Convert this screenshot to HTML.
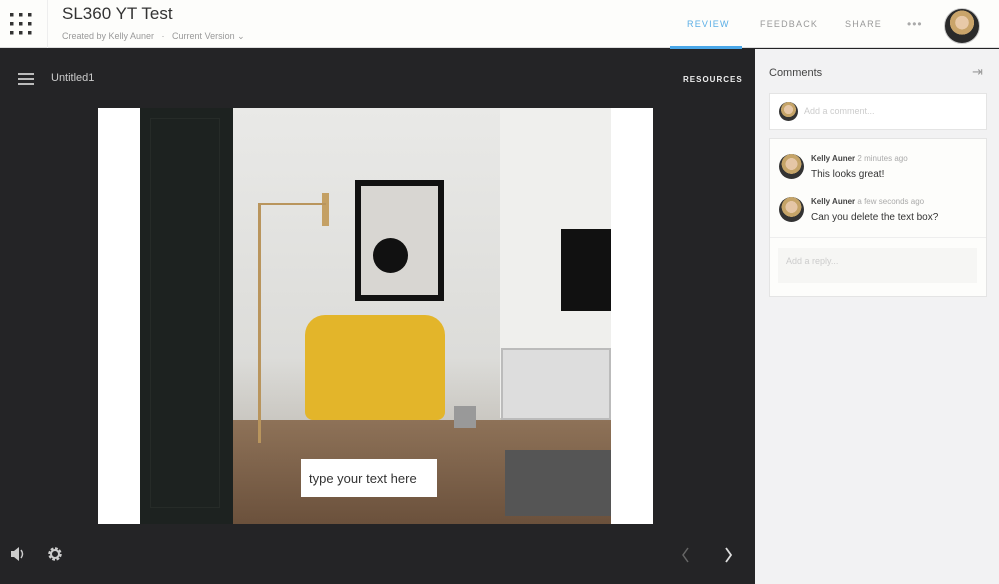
<!DOCTYPE html>
<html><head><style>
*{margin:0;padding:0;box-sizing:border-box}
body{width:999px;height:584px;overflow:hidden;font-family:"Liberation Sans",sans-serif;background:#242426;position:relative}
.a{position:absolute}
</style></head><body>
<div class="a" style="left:0;top:0;width:999px;height:48px;background:#fdfdfb;border-bottom:1px solid #ddd"></div>
<div class="a" style="left:47px;top:0;width:1px;height:48px;background:#eee"></div>
<svg class="a" style="left:10px;top:13px" width="24" height="22"><g fill="#333"><rect x="0" y="0" width="3.5" height="3.5"/><rect x="9" y="0" width="3.5" height="3.5"/><rect x="18" y="0" width="3.5" height="3.5"/><rect x="0" y="9" width="3.5" height="3.5"/><rect x="9" y="9" width="3.5" height="3.5"/><rect x="18" y="9" width="3.5" height="3.5"/><rect x="0" y="18" width="3.5" height="3.5"/><rect x="9" y="18" width="3.5" height="3.5"/><rect x="18" y="18" width="3.5" height="3.5"/></g></svg>
<div class="a" style="left:62px;top:4px;font-size:17px;color:#333">SL360 YT Test</div>
<div class="a" style="left:62px;top:31px;font-size:9px;color:#999">Created by Kelly Auner &nbsp;&nbsp;·&nbsp;&nbsp; Current Version ⌄</div>
<div class="a" style="left:687px;top:19px;font-size:9px;letter-spacing:1.2px;color:#5aaee6">REVIEW</div>
<div class="a" style="left:670px;top:46px;width:72px;height:3px;background:#4aa7e8"></div>
<div class="a" style="left:760px;top:19px;font-size:9px;letter-spacing:1.2px;color:#999">FEEDBACK</div>
<div class="a" style="left:845px;top:19px;font-size:9px;letter-spacing:1.2px;color:#999">SHARE</div>
<div class="a" style="left:907px;top:17px;font-size:12px;letter-spacing:1px;color:#aaa">•••</div>
<div class="a" style="left:944px;top:8px;width:36px;height:36px;border-radius:50%;background:radial-gradient(circle at 50% 40%,#e8c9a8 0 25%,#c9a46a 26% 45%,#2a2a2a 46%);border:1px solid #ccc"></div>
<svg class="a" style="left:18px;top:73px" width="17" height="12"><g fill="#bbb"><rect y="0" width="16" height="2"/><rect y="5" width="16" height="2"/><rect y="10" width="16" height="2"/></g></svg>
<div class="a" style="left:51px;top:72px;font-size:11px;color:#ccc">Untitled1</div>
<div class="a" style="left:683px;top:75px;font-size:8px;font-weight:bold;letter-spacing:1px;color:#eee">RESOURCES</div>
<div class="a" style="left:98px;top:108px;width:555px;height:416px;background:#fff"></div>
<div class="a" style="left:140px;top:108px;width:471px;height:416px;background:linear-gradient(#e9e9e7,#dcdcd9 60%,#c9c6c0 76%);overflow:hidden">
 <div class="a" style="left:0;top:312px;width:471px;height:104px;background:linear-gradient(#8e7258,#6b513c)"></div>
 <div class="a" style="left:360px;top:0;width:111px;height:310px;background:#efefed"></div>
 <div class="a" style="left:0;top:0;width:93px;height:416px;background:#1d2220"></div>
 <div class="a" style="left:10px;top:10px;width:70px;height:390px;border:1px solid #262b28"></div>
 <div class="a" style="left:421px;top:121px;width:50px;height:82px;background:#111"></div>
 <div class="a" style="left:215px;top:72px;width:89px;height:121px;background:#111;padding:6px"><div style="width:100%;height:100%;background:#d8d6d2;position:relative"><div class="a" style="left:12px;top:52px;width:35px;height:35px;border-radius:50%;background:#111"></div></div></div>
 <div class="a" style="left:361px;top:240px;width:110px;height:72px;background:#ddd;border:2px solid #bbb"></div>
 <div class="a" style="left:118px;top:95px;width:3px;height:240px;background:#b9955d"></div>
 <div class="a" style="left:182px;top:85px;width:7px;height:33px;background:#c4a064"></div>
 <div class="a" style="left:118px;top:95px;width:68px;height:2px;background:#b9955d"></div>
 <div class="a" style="left:165px;top:207px;width:140px;height:105px;background:#e3b52a;border-radius:20px 20px 8px 8px"></div>
 <div class="a" style="left:314px;top:298px;width:22px;height:22px;background:#999"></div>
 <div class="a" style="left:365px;top:342px;width:106px;height:66px;background:#555"></div>
</div>
<div class="a" style="left:301px;top:459px;width:136px;height:38px;background:#fff"></div>
<div class="a" style="left:309px;top:471px;font-size:13px;color:#333">type your text here</div>
<svg class="a" style="left:10px;top:545px" width="56" height="18"><path d="M1 6h3l5-4v14l-5-4H1z" fill="#ccc"/><path d="M11 5q3 4 0 8" stroke="#ccc" fill="none" stroke-width="1.5"/><circle cx="45" cy="9" r="5" fill="none" stroke="#ccc" stroke-width="3.5" stroke-dasharray="2.5 1.4"/><circle cx="45" cy="9" r="4" fill="none" stroke="#ccc" stroke-width="2"/></svg>
<svg class="a" style="left:680px;top:546px" width="60" height="18"><path d="M8 2l-5 7 5 7" stroke="#666" stroke-width="1.5" fill="none"/><path d="M46 2l5 7-5 7" stroke="#ddd" stroke-width="1.8" fill="none"/></svg>
<div class="a" style="left:755px;top:49px;width:244px;height:535px;background:#f2f2f3"></div>
<div class="a" style="left:769px;top:67px;font-size:11px;color:#444">Comments</div>
<div class="a" style="left:972px;top:64px;font-size:13px;color:#999">⇥</div>
<div class="a" style="left:769px;top:93px;width:218px;height:37px;background:#fff;border:1px solid #e4e4e4"></div>
<div class="a" style="left:779px;top:102px;width:19px;height:19px;border-radius:50%;background:radial-gradient(circle at 50% 40%,#e5c6a6 0 30%,#c5a468 31% 50%,#333 51%)"></div>
<div class="a" style="left:804px;top:106px;font-size:9px;color:#ccc">Add a comment...</div>
<div class="a" style="left:769px;top:138px;width:218px;height:159px;background:#fdfdfb;border:1px solid #e4e4e4"></div>
<div class="a" style="left:779px;top:154px;width:25px;height:25px;border-radius:50%;background:radial-gradient(circle at 50% 40%,#e5c6a6 0 30%,#c5a468 31% 50%,#333 51%)"></div>
<div class="a" style="left:811px;top:154px;font-size:8px;color:#444"><b>Kelly Auner</b> <span style="color:#aaa">2 minutes ago</span></div>
<div class="a" style="left:811px;top:169px;font-size:10px;color:#333">This looks great!</div>
<div class="a" style="left:779px;top:197px;width:25px;height:25px;border-radius:50%;background:radial-gradient(circle at 50% 40%,#e5c6a6 0 30%,#c5a468 31% 50%,#333 51%)"></div>
<div class="a" style="left:811px;top:197px;font-size:8px;color:#444"><b>Kelly Auner</b> <span style="color:#aaa">a few seconds ago</span></div>
<div class="a" style="left:811px;top:212px;font-size:10px;color:#333">Can you delete the text box?</div>
<div class="a" style="left:770px;top:237px;width:216px;height:1px;background:#eee"></div>
<div class="a" style="left:778px;top:248px;width:199px;height:35px;background:#f6f6f4"></div>
<div class="a" style="left:786px;top:256px;font-size:9px;color:#ccc">Add a reply...</div>
</body></html>
